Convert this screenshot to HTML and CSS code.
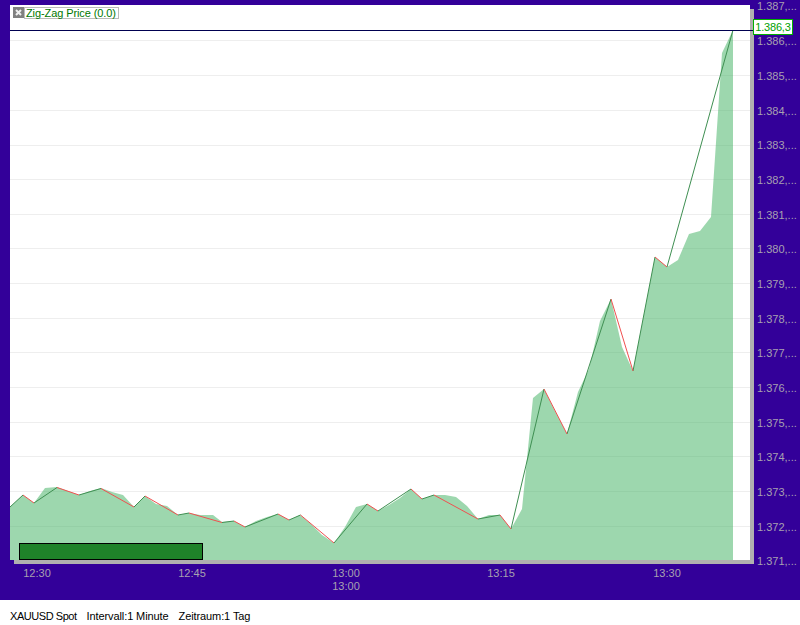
FILE: index.html
```html
<!DOCTYPE html>
<html lang="de">
<head>
    <meta charset="UTF-8">
    <meta name="viewport" content="width=device-width, initial-scale=1.0">
    <title>XAUUSD Spot</title>
    <link rel="stylesheet" href="styles.css">
</head>
<body>
    <div class="chart">
        <svg class="chart-svg" width="800" height="600" viewBox="0 0 800 600">
            <rect class="plot-shadow" x="14" y="9" width="740" height="555"/>
            <rect class="plot-bg" x="10" y="5" width="740" height="555"/>
            <path class="grid" d="M10 40.5H750M10 75.5H750M10 110.5H750M10 145.5H750M10 179.5H750M10 214.5H750M10 248.5H750M10 283.5H750M10 318.5H750M10 352.5H750M10 387.5H750M10 422.5H750M10 456.5H750M10 491.5H750M10 526.5H750"/>
            <polygon class="area" points="10,560 10,507 23,495 34,503 45,488 57,487 68,491 79,495 90,491 101,488 112,492 123,495 134,507 145,496 156,504 167,506 178,515 189,513 200,515 213,515 222,522 234,521 245,527 256,521 267,517 278,514 289,520 300,515 311,524 322,535 334,543 345,527 356,507 367,504 378,511 389,505 400,498 411,489 422,499 434,495 445,495 456,497 467,506 478,519 489,515 500,515 511,529 522,509 533,398 544,389 555,411 567,434 578,392 589,369 600,321 611,299 622,347 633,371 644,314 655,257 667,267 678,260 689,234 700,231 711,217 722,53 733,30 733,560"/>
            <path class="zig-up" d="M10 507L23 495M34 503L57 487.5M79 495L101 488.5M134 507L145 496M178 515L189 513M222 522.5L234 521M245 527L278 514M289 520L300.5 515M334 543L367 504M378 511L411 489M422 499L434 495M478 519L500 515M511 529L544 389M567 434L611 299M633 371L655 257M667 267L733 30"/>
            <path class="zig-down" d="M23 495L34 503M57 487.5L79 495M101 488.5L134 507M145 496L178 515M189 513L222 522.5M234 521L245 527M278 514L289 520M300.5 515L334 543M367 504L378 511M411 489L422 499M434 495L478 519M500 515L511 529M544 389L567 434M611 299L633 371M655 257L667 267"/>
            <rect class="volume-bar" x="19.5" y="543.5" width="183" height="16"/>
            <line class="price-line" x1="10" y1="30.5" x2="754" y2="30.5"/>

            <g class="axis-text">
                <text x="757" y="10">1.387,...</text>
                <text x="757" y="45">1.386,...</text>
                <text x="757" y="80">1.385,...</text>
                <text x="757" y="115">1.384,...</text>
                <text x="757" y="149">1.383,...</text>
                <text x="757" y="184">1.382,...</text>
                <text x="757" y="219">1.381,...</text>
                <text x="757" y="253">1.380,...</text>
                <text x="757" y="288">1.379,...</text>
                <text x="757" y="323">1.378,...</text>
                <text x="757" y="357">1.377,...</text>
                <text x="757" y="392">1.376,...</text>
                <text x="757" y="427">1.375,...</text>
                <text x="757" y="461">1.374,...</text>
                <text x="757" y="496">1.373,...</text>
                <text x="757" y="531">1.372,...</text>
                <text x="757" y="565">1.371,...</text>
            </g>
            <g class="axis-text time">
                <text x="37" y="577">12:30</text>
                <text x="192" y="577">12:45</text>
                <text x="346" y="577">13:00</text>
                <text x="346" y="590">13:00</text>
                <text x="501" y="577">13:15</text>
                <text x="667" y="577">13:30</text>
            </g>
        </svg>

        <div class="legend">
            <svg class="legend-close" width="11" height="11" viewBox="0 0 11 11">
                <rect width="11" height="11" fill="#808080"/>
                <path d="M3 3L8 8M8 3L3 8" stroke="#f0f0f0" stroke-width="2"/>
            </svg>
            <span class="legend-label">Zig-Zag Price (0.0)</span>
        </div>
        <div class="price-tag">1.386,3</div>
    </div>

    <div class="status-bar">
        <span class="status-symbol">XAUUSD Spot</span>
        <span>Intervall:1 Minute</span>
        <span>Zeitraum:1 Tag</span>
    </div>
</body>
</html>
```

FILE: styles.css
```css
body {
    margin: 0;
    background: white;
    font-family: "Liberation Sans", Arial, sans-serif;
    font-size: 11px;
}
.chart {
    position: relative;
    height: 600px;
    background: #330099;
}
.chart-svg {
    display: block;
}
.plot-shadow {
    fill: #b0b0b0;
}
.plot-bg {
    fill: white;
}
.grid {
    fill: none;
    stroke: #eeeeee;
    stroke-width: 1;
}
.area {
    fill: #3baf5d;
    fill-opacity: 0.5;
}
.zig-up {
    fill: none;
    stroke: #3f8f52;
    stroke-width: 1;
}
.zig-down {
    fill: none;
    stroke: #f05050;
    stroke-width: 1;
}
.volume-bar {
    fill: #1f8229;
    stroke: black;
    stroke-width: 1;
}
.price-line {
    stroke: #000050;
    stroke-width: 1;
}
.axis-text {
    fill: #a8a0b0;
    font-size: 11px;
}
.axis-text.time {
    text-anchor: middle;
}
.legend {
    position: absolute;
    left: 13px;
    top: 7px;
    display: flex;
}
.legend-close {
    display: block;
}
.legend-label {
    height: 10px;
    padding: 0 2px 0 1px;
    border: 1px solid #bbbbbb;
    color: #007700;
    letter-spacing: -0.1px;
    line-height: 10px;
    white-space: nowrap;
}
.price-tag {
    position: absolute;
    left: 753px;
    top: 19px;
    width: 36px;
    height: 12px;
    padding: 1px;
    border: 1px solid #00b000;
    background: white;
    color: #00a000;
    letter-spacing: -0.2px;
    line-height: 12px;
    text-align: center;
}
.status-bar {
    display: flex;
    gap: 10px;
    height: 25px;
    padding-left: 10px;
    color: black;
    letter-spacing: -0.1px;
    line-height: 32px;
}
.status-symbol {
    letter-spacing: -0.45px;
}
```
